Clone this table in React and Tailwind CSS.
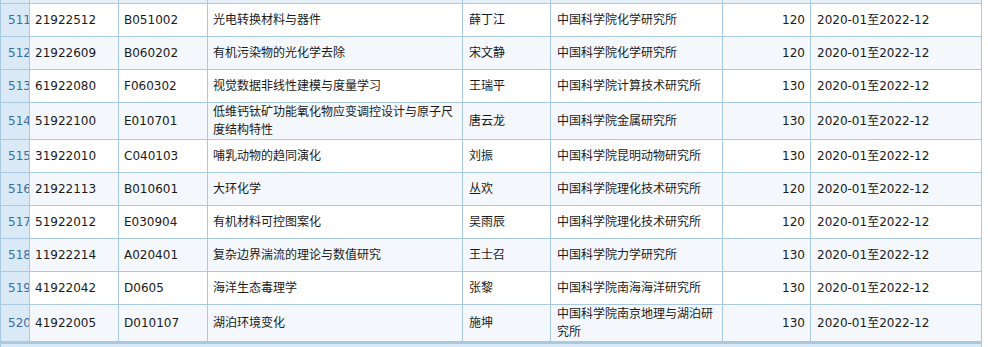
import React from "react";

const rows = [
  ["511", "21922512", "B051002", "光电转换材料与器件", "薛丁江", "中国科学院化学研究所", "120"],
  ["512", "21922609", "B060202", "有机污染物的光化学去除", "宋文静", "中国科学院化学研究所", "120"],
  ["513", "61922080", "F060302", "视觉数据非线性建模与度量学习", "王瑞平", "中国科学院计算技术研究所", "130"],
  ["514", "51922100", "E010701", "低维钙钛矿功能氧化物应变调控设计与原子尺度结构特性", "唐云龙", "中国科学院金属研究所", "130"],
  ["515", "31922010", "C040103", "哺乳动物的趋同演化", "刘振", "中国科学院昆明动物研究所", "130"],
  ["516", "21922113", "B010601", "大环化学", "丛欢", "中国科学院理化技术研究所", "120"],
  ["517", "51922012", "E030904", "有机材料可控图案化", "吴雨辰", "中国科学院理化技术研究所", "120"],
  ["518", "11922214", "A020401", "复杂边界湍流的理论与数值研究", "王士召", "中国科学院力学研究所", "130"],
  ["519", "41922042", "D0605", "海洋生态毒理学", "张黎", "中国科学院南海海洋研究所", "130"],
  ["520", "41922005", "D010107", "湖泊环境变化", "施坤", "中国科学院南京地理与湖泊研究所", "130"],
];

const font = { fontFamily: '"DejaVu Sans", "Noto Sans CJK SC", sans-serif' };

function Row({ r, i }) {
  const bg = i % 2 === 0 ? "bg-white" : "bg-[#f4f8fd]";
  const tall = r[0] === "514" || r[0] === "520";
  const h = tall ? "h-[37px]" : "h-[33px]";
  const cell = "flex items-center border-r border-[#a9c9e2] px-[5px] overflow-hidden";
  return (
    <div className={`flex ${h} border-b border-[#a9c9e2] ${bg}`}>
      <div className="flex items-center w-[30px] shrink-0 border-l border-r border-[#a9c9e2] bg-[#dae9f6] pl-[7px] overflow-hidden whitespace-nowrap text-[#3a6d9e]">
        {r[0]}
      </div>
      <div className={`${cell} w-[89px] shrink-0`}>{r[1]}</div>
      <div className={`${cell} w-[89px] shrink-0`}>{r[2]}</div>
      <div className={`${cell} w-[255px] shrink-0`}>{r[3]}</div>
      <div className={`${cell} w-[88px] shrink-0 pl-[6px]`}>{r[4]}</div>
      <div className={`${cell} w-[172px] shrink-0 pl-[6px]`}>{r[5]}</div>
      <div className={`${cell} w-[88px] shrink-0 justify-end`}>{r[6]}</div>
      <div className={`${cell} w-[171px] shrink-0 pl-[6px]`}>2020-01至2022-12</div>
    </div>
  );
}

export default function App() {
  return (
    <div className="w-[988px] h-[347px] bg-white overflow-hidden text-[12px] leading-[18px] text-[#1a1a1a]" style={font}>
      <div className="w-[982px]">
        <div className="flex h-[4px] border-b border-[#a9c9e2] bg-[#e6f0f9]">
          <div className="w-[30px] shrink-0 border-l border-r border-[#a9c9e2] bg-[#dae9f6]" />
          <div className="w-[89px] shrink-0 border-r border-[#a9c9e2]" />
          <div className="w-[89px] shrink-0 border-r border-[#a9c9e2]" />
          <div className="w-[255px] shrink-0 border-r border-[#a9c9e2]" />
          <div className="w-[88px] shrink-0 border-r border-[#a9c9e2]" />
          <div className="w-[172px] shrink-0 border-r border-[#a9c9e2]" />
          <div className="w-[88px] shrink-0 border-r border-[#a9c9e2]" />
          <div className="w-[171px] shrink-0 border-r border-[#a9c9e2]" />
        </div>
        {rows.map((r, i) => (
          <Row key={r[0]} r={r} i={i} />
        ))}
        <div className="h-[2px] bg-[#a9c9e2]" />
        <div className="h-[10px] bg-[#dae9f6] border-l border-r border-[#a9c9e2]" />
      </div>
    </div>
  );
}
